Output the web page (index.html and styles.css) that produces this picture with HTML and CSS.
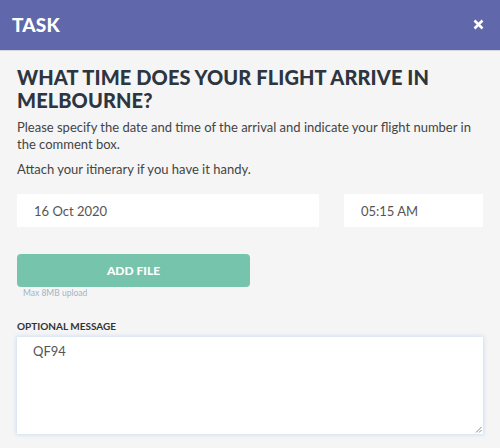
FILE: index.html
```html
<!DOCTYPE html>
<html>
<head>
<meta charset="utf-8">
<link rel="stylesheet" href="styles.css">
</head>
<body>
<div class="modal">
  <header class="header">
    <span class="header-title">TASK</span>
    <span class="close">
      <svg width="11" height="11" viewBox="0 0 11 11"><path d="M1.5 1.5 L9.5 9.5 M9.5 1.5 L1.5 9.5" stroke="#fff" stroke-width="2.6" stroke-linecap="butt"/></svg>
    </span>
  </header>
  <main class="content">
    <h1 class="question">WHAT TIME DOES YOUR FLIGHT ARRIVE IN MELBOURNE?</h1>
    <p class="desc">Please specify the date and time of the arrival and indicate your flight number in the comment box.</p>
    <p class="desc attach">Attach your itinerary if you have it handy.</p>
    <div class="row">
      <div class="field date">16 Oct 2020</div>
      <div class="field time">05:15 AM</div>
    </div>
    <div class="upload">
      <button class="btn">ADD FILE</button>
      <div class="hint">Max 8MB upload</div>
    </div>
    <label class="label">OPTIONAL MESSAGE</label>
    <div class="textarea">QF94<span class="grip"><svg width="7" height="7" viewBox="0 0 7 7"><path d="M6.5 1 L1 6.5 M6.5 4 L4 6.5" stroke="#888" stroke-width="1"/></svg></span></div>
  </main>
</div>
</body>
</html>
```
FILE: styles.css
```css
* { box-sizing: border-box; }
html, body { margin: 0; padding: 0; }
body {
  width: 500px;
  height: 448px;
  overflow: hidden;
  background: #f5f5f5;
  font-family: "Lato", "Open Sans", sans-serif;
  color: #333;
}
.header {
  height: 51px;
  background: #6067aa;
  border-bottom: 1px solid #d8d8e0;
  display: flex;
  align-items: center;
  justify-content: space-between;
  padding: 0 16px 0 12px;
}
.header-title {
  color: #fff;
  font-weight: 900;
  font-size: 19px;
  letter-spacing: 0.2px;
  margin-top: -2px;
}
.close { display: flex; margin-top: -1px; }
.content { padding: 15px 17px 0 17px; }
.question {
  margin: 0;
  font-size: 20px;
  line-height: 23px;
  font-weight: 900;
  color: #2d3640;
  letter-spacing: 0.1px;
}
.desc {
  margin: 7px 0 0 0;
  font-size: 13px;
  line-height: 17px;
  color: #444;
}
.attach { margin-top: 8px; }
.row {
  display: flex;
  justify-content: space-between;
  margin-top: 16px;
}
.field {
  background: #fff;
  height: 33px;
  font-size: 13px;
  color: #555;
  display: flex;
  align-items: center;
}
.date { width: 302px; padding-left: 17px; }
.time { width: 139px; padding-left: 17px; }
.upload { margin-top: 27px; }
.btn {
  width: 233px;
  height: 33px;
  border: none;
  border-radius: 4px;
  background: #76c4ab;
  color: #fff;
  font-family: inherit;
  font-weight: 900;
  font-size: 12px;
  display: block;
  padding: 0;
}
.hint {
  font-size: 8.5px;
  color: #a3b4c6;
  margin: 1px 0 0 6px;
  line-height: 11px;
}
.label {
  display: block;
  margin-top: 21px;
  font-size: 10px;
  font-weight: 700;
  color: #333;
}
.textarea {
  position: relative;
  margin-top: 5px;
  height: 97px;
  background: #fff;
  box-shadow: 0 0 4px 1px #cfe0f0;
  font-size: 13px;
  color: #555;
  padding: 6px 16px;
}
.grip { position: absolute; right: 1px; bottom: 1px; display: flex; }
```
